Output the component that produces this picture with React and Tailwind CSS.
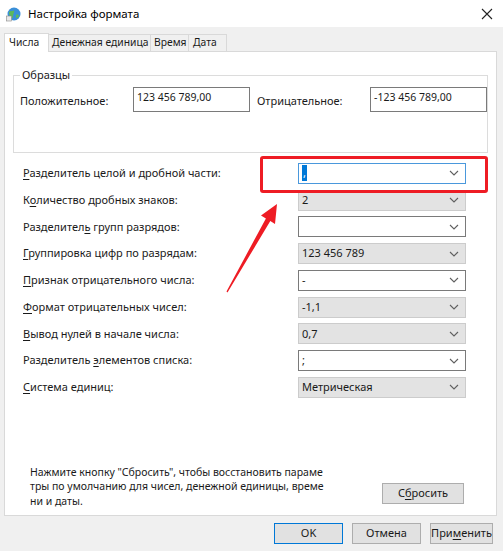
import React from 'react';

const rows = [
  { label: ['', 'Р', 'азделитель целой и дробной части:'], value: ',', kind: 'focus' },
  { label: ['К', 'о', 'личество дробных знаков:'], value: '2', kind: 'gray' },
  { label: ['Разделител', 'ь', ' групп разрядов:'], value: '', kind: 'white' },
  { label: ['', 'Г', 'руппировка цифр по разрядам:'], value: '123 456 789', kind: 'gray' },
  { label: ['', 'П', 'ризнак отрицательного числа:'], value: '-', kind: 'white' },
  { label: ['', 'Ф', 'ормат отрицательных чисел:'], value: '-1,1', kind: 'gray' },
  { label: ['', 'В', 'ывод нулей в начале числа:'], value: '0,7', kind: 'gray' },
  { label: ['Разделитель ', 'э', 'лементов списка:'], value: ';', kind: 'white' },
  { label: ['', 'С', 'истема единиц:'], value: 'Метрическая', kind: 'gray' },
];

function Chevron() {
  return (
    <svg width="10" height="6" viewBox="0 0 10 6" className="shrink-0">
      <path d="M1 1 L5 5 L9 1" fill="none" stroke="#606060" strokeWidth="1.1" />
    </svg>
  );
}

function Combo({ value, kind }) {
  const box =
    kind === 'gray'
      ? 'bg-[#e3e3e3] border-[#cccccc]'
      : kind === 'focus'
      ? 'bg-white border-[#4a98dc]'
      : 'bg-white border-[#7a7a7a]';
  return (
    <div className={`w-[168px] h-[21px] border ${box} flex items-center pl-[3px] pr-[6px]`}>
      <div className="flex-1 flex items-center text-[11px]">
        {kind === 'focus' ? (
          <span className="bg-[#0078d7] text-white leading-[16px] px-[1px]">{value}</span>
        ) : (
          <span>{value}</span>
        )}
      </div>
      <Chevron />
    </div>
  );
}

function Label({ parts }) {
  return (
    <span>
      {parts[0]}
      <span className="underline underline-offset-2">{parts[1]}</span>
      {parts[2]}
    </span>
  );
}

function Btn({ children, primary, w }) {
  return (
    <button
      className={`${w} h-[21px] bg-[#e1e1e1] border ${
        primary ? 'border-[#0078d7]' : 'border-[#adadad]'
      } text-[11px] text-[#1a1a1a] flex items-center justify-center`}
    >
      {children}
    </button>
  );
}

export default function App() {
  return (
    <div
      className="relative w-[503px] h-[551px] bg-[#f0f0f0] overflow-hidden text-[11px] text-[#1a1a1a] flex flex-col"
      style={{ fontFamily: '"Noto Sans", "Open Sans", sans-serif' }}
    >
      {/* title bar */}
      <div className="h-[27px] bg-white flex items-center pl-[6px] pr-[8px] shrink-0">
        <svg width="16" height="16" viewBox="0 0 16 16" className="mr-[6px]">
          <circle cx="8" cy="8" r="6.5" fill="#3a8fd8" />
          <path d="M3 6 C5 4 7 6 8 4 C9 7 6 9 7 12 C5 12 3 10 3 6 Z" fill="#5cb85c" />
          <path d="M10 9 C11 8 13 9 13 10 C12 12 10 13 10 11 Z" fill="#5cb85c" />
          <rect x="0.5" y="10" width="5" height="5" fill="#e8e8e8" stroke="#888" strokeWidth="0.6" />
        </svg>
        <span className="text-[11.5px] text-black flex-1">Настройка формата</span>
        <svg width="12" height="12" viewBox="0 0 12 12" className="mr-[2px]">
          <path d="M1 1 L11 11 M11 1 L1 11" stroke="#222" strokeWidth="1.1" />
        </svg>
      </div>

      {/* tabs */}
      <div className="h-[24px] flex items-end pl-[4px] shrink-0 relative z-10 whitespace-nowrap text-[10.3px]">
        <div className="h-[19px] w-[45px] shrink-0 bg-white border border-b-0 border-[#d9d9d9] flex items-center pl-[4px] relative top-[1px]">
          Числа
        </div>
        <div className="h-[17px] w-[102px] shrink-0 pl-[3px] border-t border-r border-[#d9d9d9] flex items-center">Денежная единица</div>
        <div className="h-[17px] w-[38px] shrink-0 pl-[3px] border-t border-r border-[#d9d9d9] flex items-center">Время</div>
        <div className="h-[17px] w-[38px] shrink-0 pl-[4px] border-t border-r border-[#d9d9d9] flex items-center">Дата</div>
      </div>

      {/* tab page */}
      <div className="ml-[4px] mr-[6px] h-[465px] bg-white border border-[#d9d9d9] flex flex-col shrink-0">
        {/* group box */}
        <div className="mt-[23px] ml-[8px] w-[475px] h-[78px] border border-[#dcdcdc] relative shrink-0">
          <span className="absolute -top-[9px] left-[6px] bg-white px-[2px]">Образцы</span>
          <div className="flex items-start mt-[11px] ml-[6px]">
            <span className="w-[114px] mt-[6px]">Положительное:</span>
            <div className="w-[118px] h-[25px] border border-[#7a7a7a] pl-[3px] leading-[18px] text-[10.5px]">123 456 789,00</div>
            <span className="w-[114px] ml-[7px] mt-[6px]">Отрицательное:</span>
            <div className="w-[118px] h-[25px] border border-[#7a7a7a] pl-[3px] leading-[18px] text-[10.5px]">-123 456 789,00</div>
          </div>
        </div>

        {/* rows */}
        <div className="mt-[7px] flex flex-col">
          {rows.map((r, i) => (
            <div key={i} className="h-[26.75px] flex items-center pl-[18px]">
              <div className="w-[275px]">
                <Label parts={r.label} />
              </div>
              <Combo value={r.value} kind={r.kind} />
            </div>
          ))}
        </div>

        {/* reset info */}
        <div className="mt-auto mb-[7px] flex items-end pl-[25px]">
          <p className="w-[327px] leading-[14.5px] whitespace-nowrap text-[10.5px]">
            Нажмите кнопку "Сбросить", чтобы восстановить параме
            <br />
            тры по умолчанию для чисел, денежной единицы, време
            <br />
            ни и даты.
          </p>
          <div className="ml-[25px] mb-[4px]">
            <Btn w="w-[82px]">
              С<span className="underline underline-offset-2">б</span>росить
            </Btn>
          </div>
        </div>
      </div>

      {/* bottom buttons */}
      <div className="flex-1 flex items-center justify-end gap-[9px] pr-[10px]">
        <Btn primary w="w-[69px]">OK</Btn>
        <Btn w="w-[69px]">Отмена</Btn>
        <Btn w="w-[63px]">
          При<span className="underline underline-offset-2">м</span>енить
        </Btn>
      </div>

      {/* annotation overlay */}
      <div className="absolute left-[260px] top-[156px] w-[228px] h-[37px] border-[3px] border-[#ee1c24] rounded-[3px] pointer-events-none" />
      <svg className="absolute left-0 top-0 pointer-events-none" width="503" height="551">
        <polygon
          points="277,204 275,224 270.3,221 227.5,292.5 226.5,291.5 265.9,218.4 261,215.5"
          fill="#ee1c24"
        />
      </svg>
    </div>
  );
}
